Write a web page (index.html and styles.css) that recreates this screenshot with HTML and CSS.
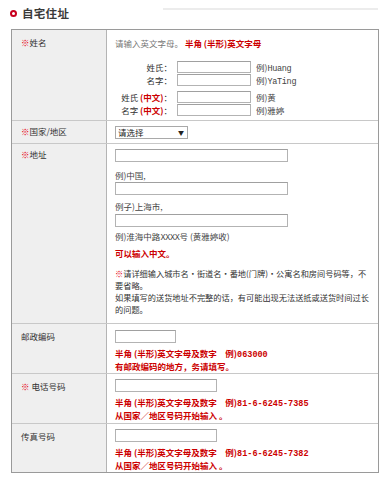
FILE: index.html
```html
<!DOCTYPE html>
<html lang="zh-CN">
<head>
<meta charset="utf-8">
<title>自宅住址</title>
<link rel="stylesheet" href="styles.css">
</head>
<body>
<div class="heading">
  <span class="ring"></span>
  <h2 class="title">自宅住址</h2>
  <span class="rule"></span>
</div>
<div class="form">
  <div class="row row-name">
    <div class="label"><span class="req">※</span>姓名</div>
    <div class="field">
      <p class="intro"><span class="hint">请输入英文字母。</span> <strong class="red">半角 (半形)英文字母</strong></p>
      <div class="name-grid">
        <span class="nlabel">姓氏：</span><input class="in w-name" type="text"><span class="ex">例)<span class="latin">Huang</span></span>
        <span class="nlabel">名字：</span><input class="in w-name" type="text"><span class="ex">例)<span class="latin">YaTing</span></span>
      </div>
      <div class="name-grid cn">
        <span class="nlabel">姓氏 <strong class="red">(中文)</strong>：</span><input class="in w-name" type="text"><span class="ex">例)黄</span>
        <span class="nlabel">名字 <strong class="red">(中文)</strong>：</span><input class="in w-name" type="text"><span class="ex">例)雅婷</span>
      </div>
    </div>
  </div>
  <div class="row row-country">
    <div class="label"><span class="req">※</span>国家/地区</div>
    <div class="field">
      <div class="select"><span>请选择</span><span class="arrow">▼</span></div>
    </div>
  </div>
  <div class="row row-address">
    <div class="label"><span class="req">※</span>地址</div>
    <div class="field">
      <input class="in w-addr" type="text">
      <p class="ex-line ex1">例)中国,</p>
      <input class="in w-addr in2" type="text">
      <p class="ex-line ex2">例子)上海市,</p>
      <input class="in w-addr in3" type="text">
      <p class="ex-line ex3">例)淮海中路<span class="latin">XXXX</span>号 (黄雅婷收)</p>
      <p class="red cn-ok">可以输入中文。</p>
      <p class="notes"><span class="req">※</span>请详细输入城市名・街道名・番地(门牌)・公寓名和房间号码等，不<br>要省略。<br>如果填写的送货地址不完整的话，有可能出现无法送抵或送货时间过长<br>的问题。</p>
    </div>
  </div>
  <div class="row row-zip">
    <div class="label">邮政编码</div>
    <div class="field">
      <input class="in w-zip" type="text">
      <p class="red redblock">半角 (半形)英文字母及数字　例)<span class="mono">063000</span><br>有邮政编码的地方，务请填写。</p>
    </div>
  </div>
  <div class="row row-tel">
    <div class="label"><span class="req">※</span> 电话号码</div>
    <div class="field">
      <input class="in w-tel" type="text">
      <p class="red redblock">半角 (半形)英文字母及数字　例)<span class="mono">81-6-6245-7385</span><br>从国家／地区号码开始输入 。</p>
    </div>
  </div>
  <div class="row row-fax">
    <div class="label">传真号码</div>
    <div class="field">
      <input class="in w-tel" type="text">
      <p class="red redblock">半角 (半形)英文字母及数字　例)<span class="mono">81-6-6245-7382</span><br>从国家／地区号码开始输入 。</p>
    </div>
  </div>
</div>
</body>
</html>
```

FILE: styles.css
```css
* { box-sizing: border-box; }
html, body { margin: 0; padding: 0; background: #fff; }
body {
  font-family: "Noto Sans CJK SC", "Noto Sans", sans-serif;
  font-size: 8.5px;
  line-height: 10px;
  color: #333;
}
p { margin: 0; }

.heading {
  display: flex;
  align-items: flex-start;
  height: 29px;
  padding: 6px 11px 0 10px;
}
.ring {
  width: 7px;
  height: 7px;
  margin-top: 4px;
  border: 2px solid #c8001e;
  border-radius: 50%;
}
.title {
  margin: 0 0 0 5px;
  font-size: 11.5px;
  line-height: 14px;
  font-weight: bold;
  color: #3a3a3a;
  letter-spacing: 0.3px;
}
.rule {
  margin-left: auto;
  margin-top: 2px;
  width: 215px;
  height: 2px;
  background: #ececec;
}

.form {
  margin-left: 11px;
  width: 368px;
  border: 1px solid #9a9a9a;
}
.row {
  display: flex;
  border-top: 1px solid #c8c8c8;
}
.row:first-child { border-top: 0; }
.label {
  flex: 0 0 95px;
  background: #efefef;
  border-right: 1px solid #b4b4b4;
  padding: 6px 0 0 9px;
  color: #333;
}
.field {
  flex: 1;
  padding: 5px 4px 0 8px;
}
.req { color: #e60012; }
.red { color: #cc0000; font-weight: bold; }

.in {
  display: block;
  margin: 0;
  padding: 0;
  height: 13px;
  border: 1px solid #b3b3b3;
  border-top-color: #a0a0a0;
  background: #fff;
  font: inherit;
}
.w-name { width: 74px; height: 12px; }
.w-addr { width: 173px; }
.w-zip { width: 61px; }
.w-tel { width: 102px; }

/* name */
.row-name { height: 90px; }
.row-name .label { padding-top: 7px; }
.row-name .field { padding-top: 7px; }
.intro { line-height: 12px; }
.hint { color: #777; }
.name-grid {
  display: grid;
  grid-template-columns: 57px 74px auto;
  grid-auto-rows: 13px;
  column-gap: 5px;
  align-items: start;
  margin-top: 12px;
}
.name-grid.cn { margin-top: 4px; }
.nlabel { text-align: right; line-height: 12px; white-space: nowrap; }
.ex { line-height: 12px; color: #444; }
.latin, .mono {
  font-family: "Liberation Mono", "DejaVu Sans Mono", monospace;
}
.latin { letter-spacing: -0.3px; }

/* country */
.row-country { height: 23px; }
.row-country .label { padding-top: 5px; }
.select {
  display: flex;
  justify-content: space-between;
  align-items: center;
  width: 73px;
  height: 13px;
  padding: 0 3px 0 2px;
  border: 1px solid #a9a9a9;
  background: #fff;
  color: #222;
  line-height: 11px;
}
.arrow { font-size: 6px; }

/* address */
.row-address { height: 180px; }
.row-address .label { padding-top: 5px; }
.ex-line { color: #444; }
.ex1 { margin-top: 8px; }
.in2 { margin-top: 2px; }
.ex2 { margin-top: 6px; }
.in3 { margin-top: 3px; }
.ex3 { margin-top: 4px; }
.cn-ok { margin-top: 5px; }
.notes {
  margin-top: 9px;
  font-size: 8.2px;
  line-height: 12px;
  white-space: nowrap;
}

/* zip / tel / fax */
.row-zip, .row-tel { height: 50px; }
.row-fax { height: 49px; }
.row-zip .field { padding-top: 6px; }
.row-tel .field, .row-fax .field { padding-top: 5px; }
.redblock { margin-top: 5px; line-height: 11px; white-space: nowrap; }
.row-zip .label, .row-tel .label, .row-fax .label { padding-top: 7px; }
```
